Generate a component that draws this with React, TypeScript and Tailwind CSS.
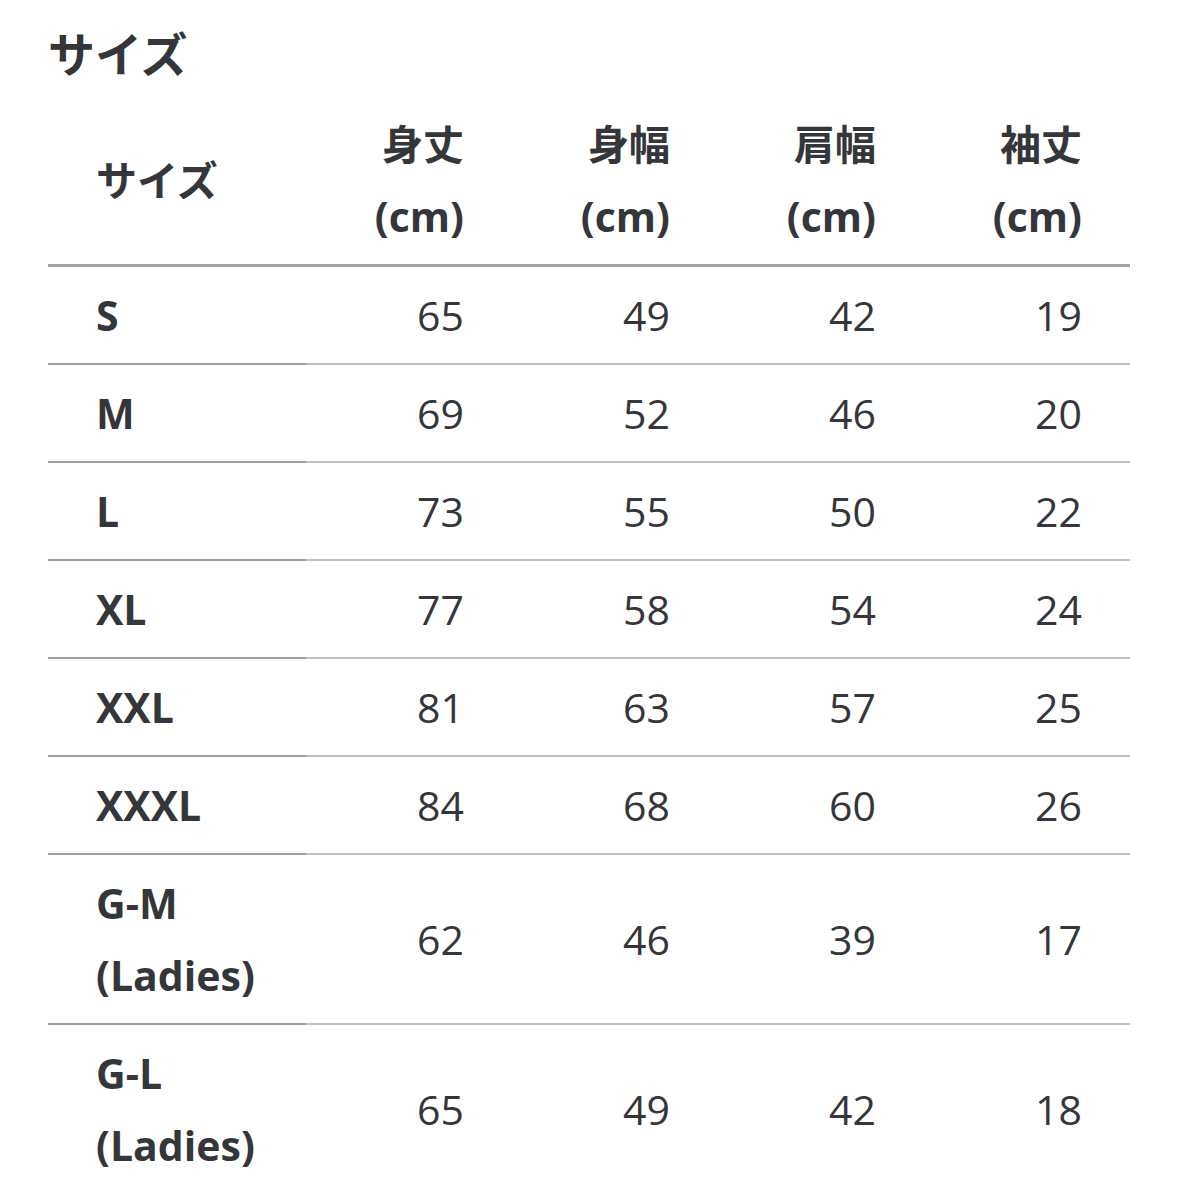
import React from "react";

const rows = [
  { size: ["S"], values: [65, 49, 42, 19] },
  { size: ["M"], values: [69, 52, 46, 20] },
  { size: ["L"], values: [73, 55, 50, 22] },
  { size: ["XL"], values: [77, 58, 54, 24] },
  { size: ["XXL"], values: [81, 63, 57, 25] },
  { size: ["XXXL"], values: [84, 68, 60, 26] },
  { size: ["G-M", "(Ladies)"], values: [62, 46, 39, 17] },
  { size: ["G-L", "(Ladies)"], values: [65, 49, 42, 18] },
];

const headers = ["身丈", "身幅", "肩幅", "袖丈"];

const App = () => {
  return (
    <div
      className="w-[1179px] h-[1179px] overflow-hidden bg-white text-[#34363a] pt-[24px] pl-[48px]"
      style={{ fontFamily: '"Open Sans", "Noto Sans CJK JP", sans-serif' }}
    >
      <h2 className="text-[47px] leading-[60px] font-bold mb-3">サイズ</h2>

      <table className="w-[1082px] table-fixed border-collapse text-[41px] leading-[72px]">
        <colgroup>
          <col className="w-[258px]" />
          <col className="w-[206px]" />
          <col className="w-[206px]" />
          <col className="w-[206px]" />
          <col className="w-[206px]" />
        </colgroup>
        <thead>
          <tr>
            <th className="text-left font-bold px-12 py-3 border-b-[3px] border-[#a2a2a2]">
              サイズ
            </th>
            {headers.map((h) => (
              <th
                key={h}
                className="text-right font-bold px-12 py-3 border-b-[3px] border-[#a2a2a2]"
              >
                {h}
                <br />
                (cm)
              </th>
            ))}
          </tr>
        </thead>
        <tbody>
          {rows.map((row, i) => (
            <tr key={i}>
              <th className="text-left font-bold px-12 py-3 border-b-2 border-[#9e9e9e] whitespace-nowrap">
                {row.size.map((s, j) => (
                  <div key={j}>{s}</div>
                ))}
              </th>
              {row.values.map((v, j) => (
                <td
                  key={j}
                  className="text-right font-normal px-12 py-3 border-b-2 border-[#bfbfbf]"
                >
                  {v}
                </td>
              ))}
            </tr>
          ))}
        </tbody>
      </table>
    </div>
  );
};

export default App;
